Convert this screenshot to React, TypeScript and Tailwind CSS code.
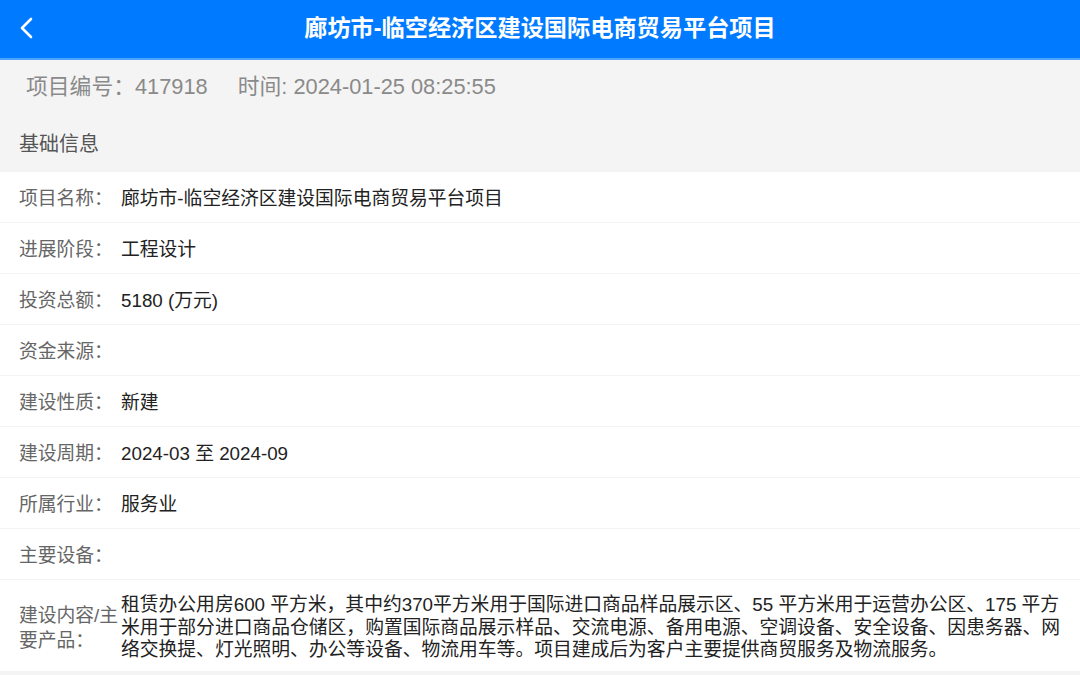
import React from 'react';

const rows: { label: string; value: string }[] = [
  { label: '项目名称：', value: '廊坊市-临空经济区建设国际电商贸易平台项目' },
  { label: '进展阶段：', value: '工程设计' },
  { label: '投资总额：', value: '5180 (万元)' },
  { label: '资金来源：', value: '' },
  { label: '建设性质：', value: '新建' },
  { label: '建设周期：', value: '2024-03 至 2024-09' },
  { label: '所属行业：', value: '服务业' },
  { label: '主要设备：', value: '' },
];

const content =
  '租赁办公用房600 平方米，其中约370平方米用于国际进口商品样品展示区、55 平方米用于运营办公区、175 平方米用于部分进口商品仓储区，购置国际商品展示样品、交流电源、备用电源、空调设备、安全设备、因患务器、网络交换提、灯光照明、办公等设备、物流用车等。项目建成后为客户主要提供商贸服务及物流服务。';

export default function App() {
  return (
    <div
      className="w-[1080px] h-[675px] overflow-hidden bg-[#f4f4f4]"
      style={{ fontFamily: '"Liberation Sans", "Noto Sans CJK SC", sans-serif' }}
    >
      {/* Header */}
      <div className="relative h-[60px] bg-[#007aff] border-b-2 border-[#4aa3ff] flex items-center justify-center">
        <button className="absolute left-[16px] top-[14px] text-white">
          <svg width="22" height="28" viewBox="0 0 22 28" fill="none">
            <path d="M15 5 L6 14 L15 23" stroke="white" strokeWidth="2.6" strokeLinecap="round" strokeLinejoin="round" />
          </svg>
        </button>
        <h1 className="text-white text-[23.2px] font-bold -mt-[1px]">
          廊坊市-临空经济区建设国际电商贸易平台项目
        </h1>
      </div>

      {/* Meta */}
      <div className="h-[55px] flex items-center pl-[26px] text-[21.8px] text-[#8a8a8a]">
        <span>项目编号：417918</span>
        <span className="ml-[30px]">时间: 2024-01-25 08:25:55</span>
      </div>

      {/* Section title */}
      <div className="h-[57px] flex items-center pl-[19px] text-[20px] text-[#555]">基础信息</div>

      {/* Rows */}
      <div className="flex flex-col gap-[1px]">
        {rows.map((r) => (
          <div key={r.label} className="h-[50px] pt-[5px] bg-white flex items-center text-[18.8px]">
            <span className="w-[121px] shrink-0 pl-[19px] text-[#666] whitespace-nowrap">{r.label}</span>
            <span className="text-[#222]">{r.value}</span>
          </div>
        ))}
        <div className="bg-white flex items-center pt-[14px] pb-[9px] text-[18.8px]">
          <span className="w-[121px] shrink-0 pl-[19px] text-[#666] leading-[25px] break-all">
            建设内容/主要产品：
          </span>
          <span className="flex-1 pr-[10px] text-[#222] leading-[22.5px]">{content}</span>
        </div>
      </div>
    </div>
  );
}
